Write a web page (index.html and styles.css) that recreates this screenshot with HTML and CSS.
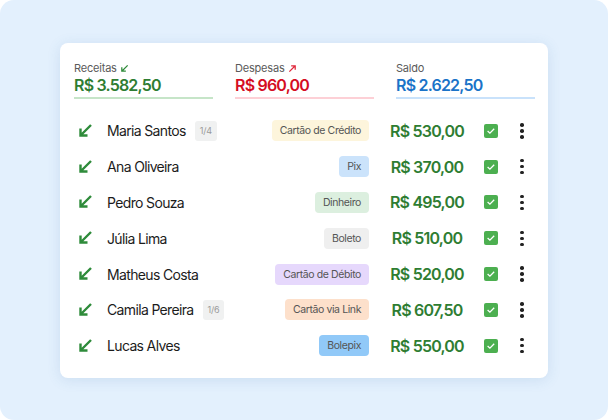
FILE: index.html
```html
<!DOCTYPE html>
<html lang="pt-BR">
<head>
<meta charset="utf-8">
<link rel="stylesheet" href="styles.css">
</head>
<body>
<div class="frame">
  <div class="card">
    <div class="summary">
      <div class="stat stat-in">
        <div class="stat-label">Receitas <svg class="mini" viewBox="0 0 10 10"><path d="M8.5 1.5 L2 8 M2 3.5 V8 H6.5" fill="none" stroke="#2e8b3a" stroke-width="1.4"/></svg></div>
        <div class="stat-value">R$ 3.582,50</div>
      </div>
      <div class="stat stat-out">
        <div class="stat-label">Despesas <svg class="mini" viewBox="0 0 10 10"><path d="M1.5 8.5 L8 2 M3.5 2 H8 V6.5" fill="none" stroke="#e0283c" stroke-width="1.4"/></svg></div>
        <div class="stat-value">R$ 960,00</div>
      </div>
      <div class="stat stat-bal">
        <div class="stat-label">Saldo</div>
        <div class="stat-value">R$ 2.622,50</div>
      </div>
    </div>

    <div class="rows">
      <div class="row">
        <span class="dir"><svg viewBox="0 0 16 16"><path d="M14 2 L3.5 12.5 M3.5 5.5 V12.5 H10.5" fill="none" stroke="#2e8b3a" stroke-width="2.4"/></svg></span>
        <span class="who"><span class="name">Maria Santos</span><span class="inst">1/4</span></span>
        <span class="pill pill-credito">Cartão de Crédito</span>
        <span class="amount">R$ 530,00</span>
        <span class="check"><svg viewBox="0 0 14 14"><path d="M3.6 7.1 L5.9 9.2 L10.2 4.8" fill="none" stroke="#fff" stroke-width="1.3"/></svg></span>
        <span class="more"><i></i><i></i><i></i></span>
      </div>
      <div class="row">
        <span class="dir"><svg viewBox="0 0 16 16"><path d="M14 2 L3.5 12.5 M3.5 5.5 V12.5 H10.5" fill="none" stroke="#2e8b3a" stroke-width="2.4"/></svg></span>
        <span class="who"><span class="name">Ana Oliveira</span></span>
        <span class="pill pill-pix">Pix</span>
        <span class="amount">R$ 370,00</span>
        <span class="check"><svg viewBox="0 0 14 14"><path d="M3.6 7.1 L5.9 9.2 L10.2 4.8" fill="none" stroke="#fff" stroke-width="1.3"/></svg></span>
        <span class="more"><i></i><i></i><i></i></span>
      </div>
      <div class="row">
        <span class="dir"><svg viewBox="0 0 16 16"><path d="M14 2 L3.5 12.5 M3.5 5.5 V12.5 H10.5" fill="none" stroke="#2e8b3a" stroke-width="2.4"/></svg></span>
        <span class="who"><span class="name">Pedro Souza</span></span>
        <span class="pill pill-dinheiro">Dinheiro</span>
        <span class="amount">R$ 495,00</span>
        <span class="check"><svg viewBox="0 0 14 14"><path d="M3.6 7.1 L5.9 9.2 L10.2 4.8" fill="none" stroke="#fff" stroke-width="1.3"/></svg></span>
        <span class="more"><i></i><i></i><i></i></span>
      </div>
      <div class="row">
        <span class="dir"><svg viewBox="0 0 16 16"><path d="M14 2 L3.5 12.5 M3.5 5.5 V12.5 H10.5" fill="none" stroke="#2e8b3a" stroke-width="2.4"/></svg></span>
        <span class="who"><span class="name">Júlia Lima</span></span>
        <span class="pill pill-boleto">Boleto</span>
        <span class="amount">R$ 510,00</span>
        <span class="check"><svg viewBox="0 0 14 14"><path d="M3.6 7.1 L5.9 9.2 L10.2 4.8" fill="none" stroke="#fff" stroke-width="1.3"/></svg></span>
        <span class="more"><i></i><i></i><i></i></span>
      </div>
      <div class="row">
        <span class="dir"><svg viewBox="0 0 16 16"><path d="M14 2 L3.5 12.5 M3.5 5.5 V12.5 H10.5" fill="none" stroke="#2e8b3a" stroke-width="2.4"/></svg></span>
        <span class="who"><span class="name">Matheus Costa</span></span>
        <span class="pill pill-debito">Cartão de Débito</span>
        <span class="amount">R$ 520,00</span>
        <span class="check"><svg viewBox="0 0 14 14"><path d="M3.6 7.1 L5.9 9.2 L10.2 4.8" fill="none" stroke="#fff" stroke-width="1.3"/></svg></span>
        <span class="more"><i></i><i></i><i></i></span>
      </div>
      <div class="row">
        <span class="dir"><svg viewBox="0 0 16 16"><path d="M14 2 L3.5 12.5 M3.5 5.5 V12.5 H10.5" fill="none" stroke="#2e8b3a" stroke-width="2.4"/></svg></span>
        <span class="who"><span class="name">Camila Pereira</span><span class="inst">1/6</span></span>
        <span class="pill pill-link">Cartão via Link</span>
        <span class="amount">R$ 607,50</span>
        <span class="check"><svg viewBox="0 0 14 14"><path d="M3.6 7.1 L5.9 9.2 L10.2 4.8" fill="none" stroke="#fff" stroke-width="1.3"/></svg></span>
        <span class="more"><i></i><i></i><i></i></span>
      </div>
      <div class="row">
        <span class="dir"><svg viewBox="0 0 16 16"><path d="M14 2 L3.5 12.5 M3.5 5.5 V12.5 H10.5" fill="none" stroke="#2e8b3a" stroke-width="2.4"/></svg></span>
        <span class="who"><span class="name">Lucas Alves</span></span>
        <span class="pill pill-bolepix">Bolepix</span>
        <span class="amount">R$ 550,00</span>
        <span class="check"><svg viewBox="0 0 14 14"><path d="M3.6 7.1 L5.9 9.2 L10.2 4.8" fill="none" stroke="#fff" stroke-width="1.3"/></svg></span>
        <span class="more"><i></i><i></i><i></i></span>
      </div>
    </div>
  </div>
</div>
</body>
</html>
```

FILE: styles.css
```css
* { box-sizing: border-box; }

html, body {
  margin: 0;
  padding: 0;
  background: #ffffff;
}

body {
  font-family: Inter, "Noto Sans", "Liberation Sans", sans-serif;
  color: #1f1f1f;
}

.frame {
  width: 608px;
  height: 420px;
  background: #e3f0fd;
  border-radius: 14px;
  padding: 43px 60px 0 60px;
}

.card {
  width: 488px;
  height: 335px;
  background: #ffffff;
  border-radius: 8px;
  box-shadow: 0 2px 14px rgba(60, 110, 170, 0.14);
  padding: 18px 14px 13px 14px;
}

.summary {
  display: grid;
  grid-template-columns: 139px 139px 139px;
  column-gap: 22px;
}

.stat-label {
  font-size: 11px;
  line-height: 14px;
  color: #5a5a5a;
  display: flex;
  align-items: center;
  gap: 3px;
  letter-spacing: -0.2px;
}

.mini {
  width: 9px;
  height: 9px;
}

.stat-value {
  font-size: 16px;
  line-height: 20px;
  font-weight: 600;
  letter-spacing: -0.8px;
}

.stat::after {
  content: "";
  display: block;
  height: 2px;
  margin-top: 2px;
}

.stat-in .stat-value { color: #2e7d32; }
.stat-in::after { background: #c6e5c8; }
.stat-out .stat-value { color: #d50d22; }
.stat-out::after { background: #fdd0d6; }
.stat-bal .stat-value { color: #1a73c8; }
.stat-bal::after { background: #c9e2fb; }

.rows {
  margin-top: 14px;
}

.row {
  display: flex;
  align-items: center;
  height: 35.8px;
}

.dir {
  width: 33px;
  padding-left: 3px;
  display: flex;
  align-items: center;
}

.dir svg {
  width: 16px;
  height: 16px;
}

.who {
  flex: 1;
  display: flex;
  align-items: center;
}

.name {
  font-size: 14px;
  color: #1c1c1c;
  letter-spacing: -0.65px;
}

.inst {
  margin-left: 9px;
  background: #f0f1f1;
  color: #9a9a9a;
  font-size: 9px;
  height: 20px;
  line-height: 20px;
  padding: 0 5px;
  border-radius: 3px;
  letter-spacing: -0.2px;
}

.pill {
  font-size: 10.5px;
  color: #555;
  height: 21px;
  line-height: 21px;
  padding: 0 8px;
  border-radius: 4px;
  letter-spacing: -0.4px;
}

.pill-credito { background: #fdf5dc; }
.pill-pix { background: #cbe3fb; }
.pill-dinheiro { background: #dcefdf; }
.pill-boleto { background: #efefef; }
.pill-debito { background: #e6d8fc; }
.pill-link { background: #fde0cb; }
.pill-bolepix { background: #91c9f8; }

.amount {
  margin-left: 20px;
  width: 76px;
  font-size: 16px;
  font-weight: 600;
  letter-spacing: -0.8px;
  color: #2e7d32;
  text-align: center;
  white-space: nowrap;
}

.check {
  margin-left: 19px;
  width: 14px;
  height: 14px;
  background: #4caf50;
  border-radius: 2px;
  display: flex;
}

.check svg {
  width: 14px;
  height: 14px;
}

.more {
  margin-left: 21px;
  margin-right: 9px;
  width: 6px;
  display: flex;
  flex-direction: column;
  align-items: center;
  gap: 2.5px;
}

.more i {
  display: block;
  width: 3.5px;
  height: 3.5px;
  border-radius: 50%;
  background: #222;
}
```
